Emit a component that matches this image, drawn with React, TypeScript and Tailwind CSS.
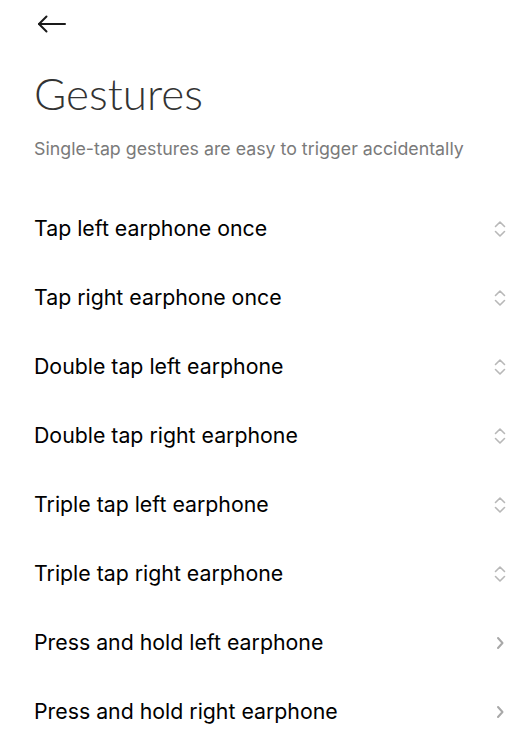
import React from "react";

const rows: { label: string; kind: "select" | "nav" }[] = [
  { label: "Tap left earphone once", kind: "select" },
  { label: "Tap right earphone once", kind: "select" },
  { label: "Double tap left earphone", kind: "select" },
  { label: "Double tap right earphone", kind: "select" },
  { label: "Triple tap left earphone", kind: "select" },
  { label: "Triple tap right earphone", kind: "select" },
  { label: "Press and hold left earphone", kind: "nav" },
  { label: "Press and hold right earphone", kind: "nav" },
];

function UpDown() {
  return (
    <svg width="14" height="20" viewBox="0 0 14 20" fill="none" stroke="#b8b8b8" strokeWidth="1.6" strokeLinecap="round" strokeLinejoin="round">
      <path d="M2.5 7.5 L7 3 L11.5 7.5" />
      <path d="M2.5 12.5 L7 17 L11.5 12.5" />
    </svg>
  );
}

function Chevron() {
  return (
    <svg width="10" height="16" viewBox="0 0 10 16" fill="none" stroke="#a8a8a8" strokeWidth="2" strokeLinecap="round" strokeLinejoin="round">
      <path d="M3 3 L7.5 8 L3 13" />
    </svg>
  );
}

export default function App() {
  return (
    <div className="w-[528px] h-[750px] bg-white overflow-hidden" style={{ fontFamily: "Inter, 'Noto Sans', sans-serif" }}>
      <div className="pt-[12px] pl-[37px] h-[24px]">
        <svg width="30" height="24" viewBox="0 0 30 24" fill="none" stroke="#1a1a1a" strokeWidth="2" strokeLinecap="round" strokeLinejoin="round">
          <path d="M2 12 H28" />
          <path d="M9.5 4.5 L2 12 L9.5 19.5" />
        </svg>
      </div>
      <div className="pl-[34px] pt-[43px]">
        <h1 className="text-[44px] leading-[52px] font-light text-[#333]" style={{ fontFamily: "Lato, sans-serif" }}>Gestures</h1>
        <p className="mt-[17px] text-[17.8px] leading-[26px] text-[#7a7a7a]">Single-tap gestures are easy to trigger accidentally</p>
      </div>
      <div className="mt-[32px] flex flex-col">
        {rows.map((r) => (
          <div key={r.label} className="h-[69px] flex items-center justify-between pl-[34px] pr-[21px]">
            <span className="text-[21.3px] text-[#000]">{r.label}</span>
            <span className="w-[14px] flex justify-center">{r.kind === "select" ? <UpDown /> : <Chevron />}</span>
          </div>
        ))}
      </div>
    </div>
  );
}
